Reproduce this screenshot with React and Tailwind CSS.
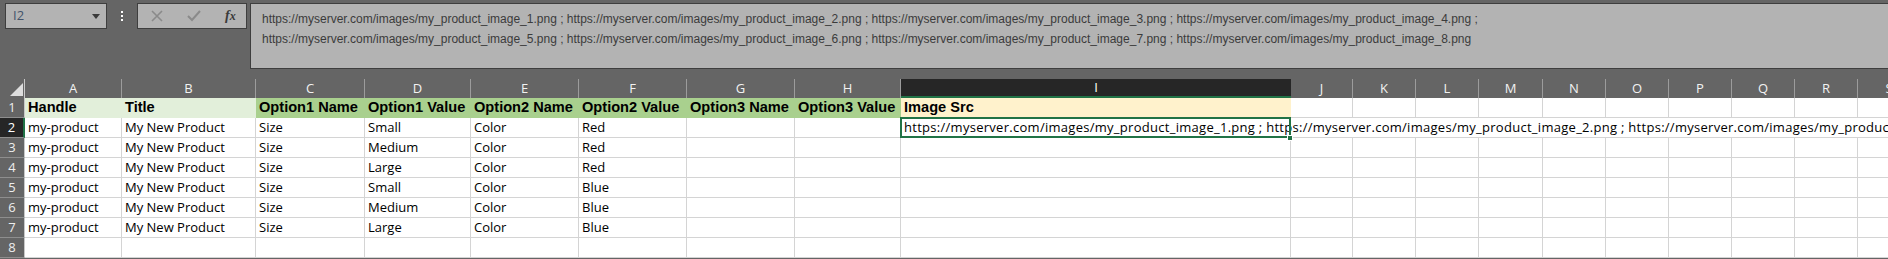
import React from 'react'

const COLS = ['A', 'B', 'C', 'D', 'E', 'F', 'G', 'H', 'I', 'J', 'K', 'L', 'M', 'N', 'O', 'P', 'Q', 'R', 'S']

const HEAD = ['Handle', 'Title', 'Option1 Name', 'Option1 Value', 'Option2 Name', 'Option2 Value', 'Option3 Name', 'Option3 Value', 'Image Src']

const HEAD_FILL = [
  'bg-[#e2efda] border-[#e2efda]',
  'bg-[#e2efda] border-[#e2efda]',
  'bg-[#a9d08e] border-[#a9d08e]',
  'bg-[#a9d08e] border-[#a9d08e]',
  'bg-[#a9d08e] border-[#a9d08e]',
  'bg-[#a9d08e] border-[#a9d08e]',
  'bg-[#a9d08e] border-[#a9d08e]',
  'bg-[#a9d08e] border-[#a9d08e]',
  'bg-[#fff2cc] border-[#fff2cc]',
]

const ROWS = [
  ['my-product', 'My New Product', 'Size', 'Small', 'Color', 'Red'],
  ['my-product', 'My New Product', 'Size', 'Medium', 'Color', 'Red'],
  ['my-product', 'My New Product', 'Size', 'Large', 'Color', 'Red'],
  ['my-product', 'My New Product', 'Size', 'Small', 'Color', 'Blue'],
  ['my-product', 'My New Product', 'Size', 'Medium', 'Color', 'Blue'],
  ['my-product', 'My New Product', 'Size', 'Large', 'Color', 'Blue'],
  [],
]

const url = (n) => `https://myserver.com/images/my_product_image_${n}.png`
const LINE1 = [1, 2, 3, 4].map(url).join(' ; ') + ' ;'
const LINE2 = [5, 6, 7, 8].map(url).join(' ; ')
const FULL = [1, 2, 3, 4, 5, 6, 7, 8].map(url).join(' ; ')

function FormulaBar() {
  return (
    <div className="h-[79px] flex items-start pt-[3px]">
      {/* name box */}
      <div className="ml-[5px] w-[102px] h-[26px] border border-[#3e3e3e] bg-[#b3b3b3] flex items-center justify-between pl-[7px] pr-[6px]">
        <span className="text-[13px] text-[#43536b] font-['Open_Sans',sans-serif]">I2</span>
        <svg width="8" height="5" viewBox="0 0 8 5">
          <polygon points="0,0 8,0 4,5" fill="#3a3a3a" />
        </svg>
      </div>

      <div className="w-[30px] h-[26px] flex flex-col items-center justify-center gap-[2px]">
        <span className="w-[2px] h-[2px] bg-white" />
        <span className="w-[2px] h-[2px] bg-white" />
        <span className="w-[2px] h-[2px] bg-white" />
      </div>

      {/* cancel / enter / fx */}
      <div className="w-[110px] h-[26px] border border-[#3e3e3e] bg-[#b3b3b3] flex items-center">
        <svg className="ml-[13px]" width="12" height="12" viewBox="0 0 12 12" fill="none" stroke="#8a8a8a" strokeWidth="1.6">
          <path d="M1 1 L11 11 M11 1 L1 11" />
        </svg>
        <svg className="ml-[24px]" width="14" height="12" viewBox="0 0 14 12" fill="none" stroke="#8a8a8a" strokeWidth="2">
          <path d="M1 6 L5 10 L13 1" />
        </svg>
        <span className="ml-[24px] text-[14px] italic font-bold text-[#3a3a3a] font-['Liberation_Serif',serif] leading-none">
          f<span className="text-[12px]">x</span>
        </span>
      </div>

      {/* formula text */}
      <div className="ml-[3px] flex-1 h-[66px] border-l border-t border-b border-[#3e3e3e] bg-[#b3b3b3] pl-[11px] pt-[5px] text-[12px] leading-[20px] text-[#3b3b3b] font-['Liberation_Sans',sans-serif] whitespace-nowrap">
        <div>{LINE1}</div>
        <div>{LINE2}</div>
      </div>
    </div>
  )
}

function Sheet() {
  const cell = 'bg-white border-r border-b border-[#d4d4d4] pl-[3px] flex items-end pb-[1px] text-[13px] leading-[18px] text-black whitespace-nowrap font-["Open_Sans",sans-serif]'
  return (
    <div className="grid grid-cols-[25px_97px_134px_109px_106px_108px_108px_108px_106px_390px_62px_63px_63px_64px_63px_63px_63px_63px_63px_63px] grid-rows-[19px_repeat(8,20px)]">
      {/* corner */}
      <div className="bg-[#656565] border-r border-[#c8c8c8] flex items-end justify-end pr-[1px] pb-[2px]">
        <svg width="13" height="13" viewBox="0 0 13 13">
          <polygon points="13,0 13,13 0,13" fill="#dedede" />
        </svg>
      </div>
      {COLS.map((c) =>
        c === 'I' ? (
          <div key={c} className="bg-[#262626] border-b-2 border-[#217346] flex items-center justify-center text-[13px] text-white font-['Open_Sans',sans-serif]">
            {c}
          </div>
        ) : (
          <div key={c} className="bg-[#656565] border-r border-[#9c9c9c] flex items-center justify-center text-[13px] text-[#f2f2f2] font-['Open_Sans',sans-serif]">
            {c}
          </div>
        )
      )}

      {/* row 1: headings */}
      <div className="bg-[#656565] border-r border-b border-r-[#c8c8c8] border-b-[#8e8e8e] flex items-center justify-center text-[13px] text-[#ededed] font-['Open_Sans',sans-serif]">
        1
      </div>
      {COLS.map((c, i) =>
        i < HEAD.length ? (
          <div key={c} className={`${HEAD_FILL[i]} border-r border-b pl-[3px] flex items-end text-[14.6px] leading-[19px] font-bold text-black whitespace-nowrap font-['Liberation_Sans',sans-serif]`}>
            {HEAD[i]}
          </div>
        ) : (
          <div key={c} className="bg-white border-r border-b border-[#d4d4d4]" />
        )
      )}

      {/* row 2: selected row with overflowing image src */}
      <div className="bg-[#262626] border-r-2 border-b border-r-[#217346] border-b-[#8e8e8e] flex items-center justify-center text-[13px] text-white font-['Open_Sans',sans-serif]">
        2
      </div>
      {COLS.map((c, i) => {
        if (i < 6) return <div key={c} className={cell}>{ROWS[0][i]}</div>
        if (c === 'I')
          return (
            <div key={c} className={`${cell} relative z-10 overflow-visible tracking-[0.28px]`}>
              {FULL}
              <div className="absolute -left-[1px] -top-[1px] -right-[1px] -bottom-[1px] border-2 border-[#217346]" />
              <div className="absolute -right-[3px] -bottom-[4px] w-[6px] h-[6px] bg-[#217346] border border-white" />
            </div>
          )
        if (i > 8) return <div key={c} className="bg-white border-b border-[#d4d4d4]" />
        return <div key={c} className={cell} />
      })}

      {/* rows 3-8 */}
      {ROWS.slice(1).map((r, ri) => (
        <React.Fragment key={ri}>
          <div className="bg-[#656565] border-r border-b border-r-[#c8c8c8] border-b-[#8e8e8e] flex items-center justify-center text-[13px] text-[#ededed] font-['Open_Sans',sans-serif]">
            {ri + 3}
          </div>
          {COLS.map((c, i) => (
            <div key={c} className={cell}>{r[i] || ''}</div>
          ))}
        </React.Fragment>
      ))}
    </div>
  )
}

export default function App() {
  return (
    <div className="w-[1888px] h-[259px] overflow-hidden bg-[#656565]">
      <FormulaBar />
      <Sheet />
    </div>
  )
}
